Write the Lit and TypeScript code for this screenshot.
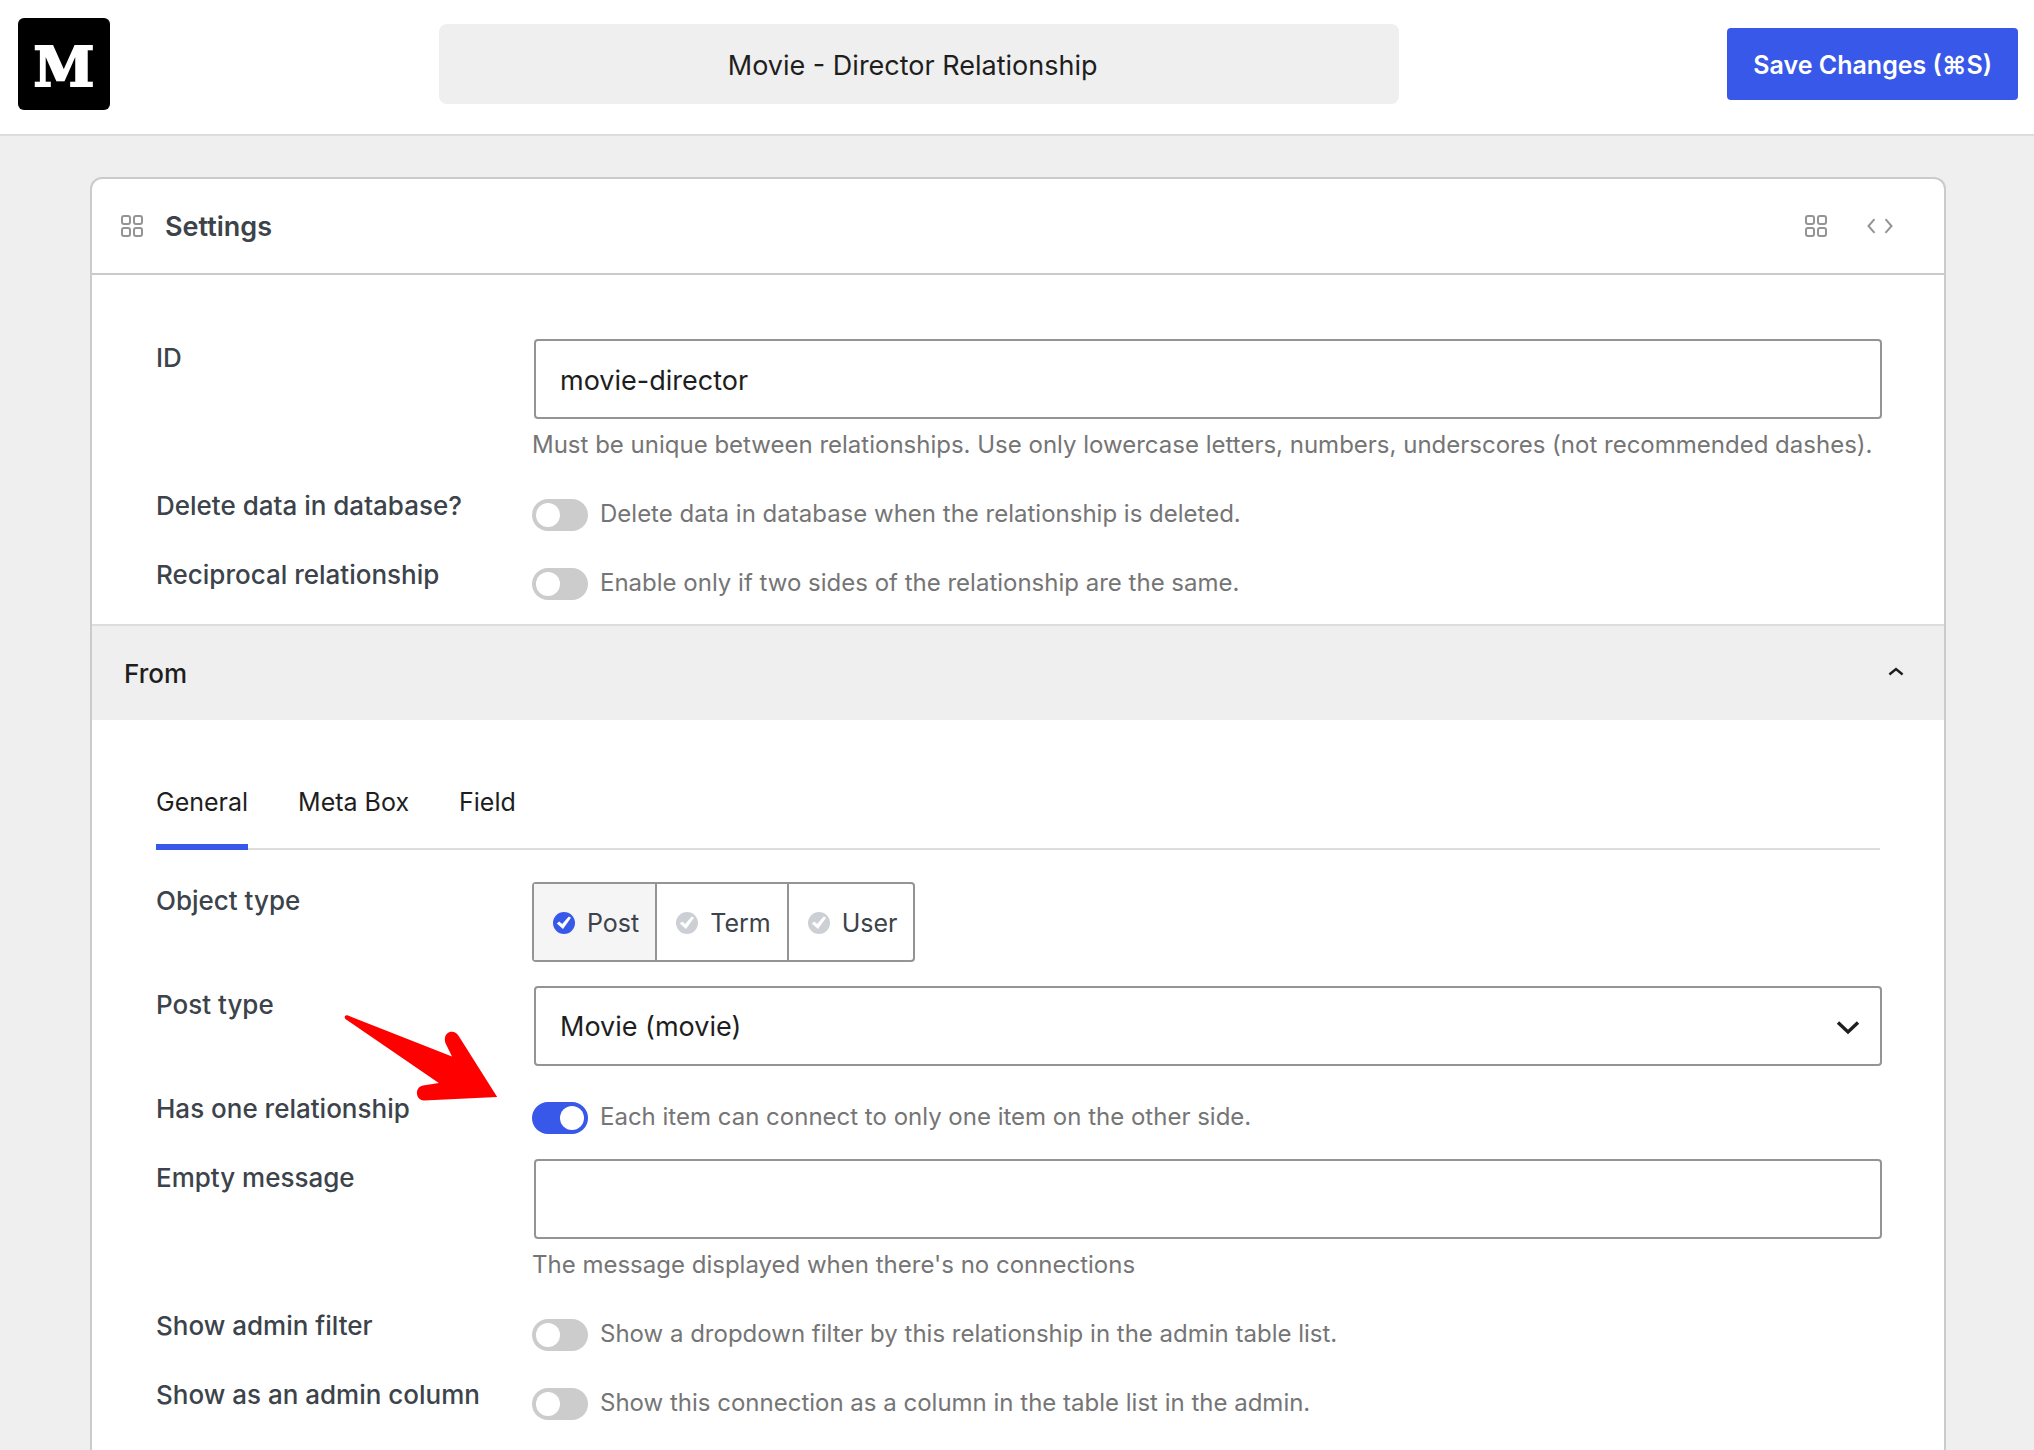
import { LitElement, html, css, svg, nothing } from "lit";
import { customElement, state } from "lit/decorators.js";

const gridIcon = html`<svg class="icon" width="22" height="22" viewBox="0 0 22 22" aria-hidden="true">
  ${[[1, 1], [13, 1], [1, 13], [13, 13]].map(
    ([x, y]) => svg`<rect x=${x} y=${y} width="8" height="8" rx="2" fill="none" stroke="currentColor" stroke-width="2" />`,
  )}
</svg>`;

const codeIcon = html`<svg class="icon" width="26" height="16" viewBox="0 0 26 16" aria-hidden="true">
  <path d="M7.5 1.2 L1.5 8 L7.5 14.8 M18.5 1.2 L24.5 8 L18.5 14.8" fill="none" stroke="currentColor" stroke-width="2" />
</svg>`;

@customElement("setting-row")
export class SettingRow extends LitElement {
  static styles = css`
    :host {
      display: grid;
      grid-template-columns: 376px minmax(0, 1fr);
      align-items: start;
      position: relative;
    }
  `;

  render() {
    return html`<slot name="label"></slot><slot></slot>`;
  }
}

@customElement("app-root")
export class AppRoot extends LitElement {
  static styles = css`
    :host {
      display: flex;
      flex-direction: column;
      min-height: 100vh;
      box-sizing: border-box;
      background: #efefef;
      color: #1e1e1e;
      font-family: Inter, "Liberation Sans", sans-serif;
      font-size: 26px;
      line-height: 36px;
    }
    *,
    *::before {
      box-sizing: border-box;
    }
    button,
    input,
    select {
      font: inherit;
      color: inherit;
      margin: 0;
    }
    button {
      border: 0;
      padding: 0;
      background: none;
      cursor: pointer;
    }
    .topbar {
      display: flex;
      align-items: flex-start;
      justify-content: space-between;
      gap: 24px;
      padding: 18px 16px 24px 18px;
      background: #fff;
      border-bottom: 2px solid #ddd;
    }
    .logo {
      display: flex;
      align-items: center;
      justify-content: center;
      width: 92px;
      height: 92px;
      padding-top: 6px;
      border-radius: 6px;
      background: #000;
      color: #fff;
      font: bold 55px/86px "DejaVu Serif", serif;
      -webkit-text-stroke: 2px #fff;
      text-decoration: none;
    }
    .title {
      flex: 0 1 960px;
      min-width: 0;
      height: 80px;
      margin-top: 6px;
      padding: 2px 24px 0 12px;
      border: 0;
      border-radius: 8px;
      background: #efefef;
      font-size: 27px;
      text-align: center;
    }
    .save {
      height: 72px;
      margin-top: 10px;
      padding: 2px 26px 0;
      border-radius: 4px;
      background: #3858e9;
      color: #fff;
      font-size: 25px;
      font-weight: 600;
      white-space: nowrap;
    }
    .card {
      flex: 1;
      margin: 41px 88px 0 90px;
      border: 2px solid #c9cbcc;
      border-bottom: 0;
      border-radius: 12px 12px 0 0;
      background: #fff;
    }
    .card-head {
      display: flex;
      align-items: center;
      gap: 22px;
      height: 96px;
      padding: 0 51px 0 29px;
      border-bottom: 2px solid #c9cbcc;
      color: #949494;
    }
    .icon {
      display: block;
    }
    .heading {
      flex: 1;
      margin: 0;
      padding-top: 2px;
      color: #3c434a;
      font-size: 27px;
      font-weight: 600;
    }
    .views {
      display: flex;
      align-items: center;
      gap: 40px;
    }
    .rows {
      display: flex;
      flex-direction: column;
      gap: 24px;
      padding: 64px 64px 23px;
    }
    .label {
      padding-top: 1px;
      color: #3c434a;
      font-size: 26px;
      font-weight: 500;
    }
    .box {
      display: block;
      width: 100%;
      height: 80px;
      margin-left: 2px;
      padding: 2px 24px 0;
      border: 2px solid #949494;
      border-radius: 4px;
      background: #fff;
      font-size: 27px;
      appearance: none;
    }
    .help {
      margin: 0;
      color: #757575;
      font-size: 24px;
    }
    .below {
      padding-top: 8px;
    }
    .switch-line {
      display: flex;
      align-items: flex-start;
      gap: 12px;
      padding-top: 8px;
      min-height: 45px;
    }
    .switch-line .help {
      padding-top: 1px;
    }
    .switch {
      flex: none;
      width: 56px;
      height: 32px;
      margin-top: 4px;
      padding: 4px;
      border-radius: 16px;
      background: #ccc;
      appearance: none;
    }
    .switch::before {
      content: "";
      display: block;
      width: 24px;
      height: 24px;
      border-radius: 50%;
      background: #fff;
    }
    .switch:checked {
      background: #3858e9;
    }
    .switch:checked::before {
      margin-left: auto;
    }
    .section-head {
      display: flex;
      align-items: center;
      justify-content: space-between;
      width: 100%;
      height: 96px;
      padding: 0 40px 0 32px;
      border-top: 2px solid #ddd;
      background: #efefef;
      font-size: 26px;
      font-weight: 500;
    }
    .section-name {
      padding-top: 2px;
    }
    .tabs {
      display: flex;
      gap: 50px;
      margin-bottom: 8px;
      border-bottom: 2px solid #ddd;
    }
    .tab {
      height: 66px;
      margin-bottom: -2px;
      padding-bottom: 24px;
      border-bottom: 6px solid transparent;
      font-size: 25px;
    }
    .tab.active {
      border-color: #3858e9;
    }
    .choices {
      display: flex;
      justify-self: start;
      height: 80px;
      border: 2px solid #949494;
      border-radius: 4px;
      color: #3c434a;
      font-size: 25px;
    }
    .choice {
      display: flex;
      align-items: center;
      gap: 12px;
      padding: 2px 16px 0 19px;
    }
    .choice + .choice {
      border-left: 2px solid #949494;
    }
    .choice.on {
      background: #f5f5f5;
    }
    .mark {
      display: grid;
      color: #ccd0d4;
    }
    .on .mark {
      color: #3858e9;
    }
    .radio,
    .tick {
      grid-area: 1 / 1;
      width: 22px;
      height: 22px;
    }
    .radio {
      border-radius: 50%;
      background: currentColor;
      appearance: none;
      color: inherit;
    }
    .tick {
      pointer-events: none;
    }
    .picker {
      position: relative;
    }
    .caret {
      position: absolute;
      right: 20px;
      top: 34px;
      pointer-events: none;
    }
    .arrow {
      position: absolute;
      left: 184px;
      top: -79px;
      pointer-events: none;
    }
  `;

  @state() private open = true;
  @state() private tab = "General";
  @state() private objectType = "Post";

  private row(id: string, label: string, control: unknown, extra: unknown = nothing) {
    return html`<setting-row>
      <label class="label" slot="label" for=${id}>${label}</label>
      ${control}${extra}
    </setting-row>`;
  }

  private text(id: string, label: string, value: string, help: string) {
    return this.row(
      id,
      label,
      html`<div>
        <input class="box" id=${id} type="text" .value=${value} aria-describedby="${id}-help" />
        <p class="help below" id="${id}-help">${help}</p>
      </div>`,
    );
  }

  private toggle(id: string, label: string, help: string, checked = false, extra: unknown = nothing) {
    return this.row(
      id,
      label,
      html`<div class="switch-line">
        <input class="switch" id=${id} type="checkbox" ?checked=${checked} aria-describedby="${id}-help" />
        <p class="help" id="${id}-help">${help}</p>
      </div>`,
      extra,
    );
  }

  private choice(name: string) {
    const on = this.objectType === name;
    return html`<label class="choice ${on ? "on" : ""}">
      <span class="mark">
        <input class="radio" type="radio" name="object-type" .checked=${on} @change=${() => (this.objectType = name)} />
        <svg class="tick" viewBox="0 0 22 22" aria-hidden="true">
          <path d="M3.8 11.4 L6.2 9.4 L9.2 12 L15.8 4.4 L18 5.8 L10 17 Z" fill="#fff" />
        </svg>
      </span>
      <span>${name}</span>
    </label>`;
  }

  private arrow() {
    return html`<svg class="arrow" width="160" height="92" viewBox="340 1010 160 92" aria-hidden="true">
      <path
        d="M348 1014.6 L452 1055.4 L445.4 1042 C442 1030 455 1027 459 1035.4 L497.2 1096 L424 1099.4 C415 1099 414.5 1086 423 1084.4 L438.8 1082 L345.4 1018 C343.6 1016 345.5 1013.6 348 1014.6 Z"
        fill="#f00"
      />
    </svg>`;
  }

  render() {
    return html`
      <header class="topbar">
        <a class="logo" href="#">M</a>
        <input class="title" type="text" aria-label="Title" .value=${"Movie - Director Relationship"} />
        <button class="save" type="button">Save Changes (⌘S)</button>
      </header>
      <main class="card">
        <div class="card-head">
          ${gridIcon}
          <h1 class="heading">Settings</h1>
          <div class="views">
            <button type="button" aria-label="Visual">${gridIcon}</button>
            <button type="button" aria-label="Code">${codeIcon}</button>
          </div>
        </div>
        <section class="rows">
          ${this.text("id", "ID", "movie-director", "Must be unique between relationships. Use only lowercase letters, numbers, underscores (not recommended dashes).")}
          ${this.toggle("delete-data", "Delete data in database?", "Delete data in database when the relationship is deleted.")}
          ${this.toggle("reciprocal", "Reciprocal relationship", "Enable only if two sides of the relationship are the same.")}
        </section>
        <button class="section-head" type="button" aria-expanded=${this.open} @click=${() => (this.open = !this.open)}>
          <span class="section-name">From</span>
          <svg width="16" height="16" viewBox="0 0 16 16" aria-hidden="true">
            <path d="M1.4 9.5 L8 4 L14.6 9.5" fill="none" stroke="#1e1e1e" stroke-width="2.4" />
          </svg>
        </button>
        ${this.open ? this.section() : nothing}
      </main>
    `;
  }

  private section() {
    return html`<section class="rows">
      <div class="tabs" role="tablist">
        ${["General", "Meta Box", "Field"].map(
          (name) => html`<button
            class="tab ${this.tab === name ? "active" : ""}"
            type="button"
            role="tab"
            aria-selected=${this.tab === name}
            @click=${() => (this.tab = name)}
          >${name}</button>`,
        )}
      </div>
      <setting-row>
        <span class="label" slot="label" id="object-type">Object type</span>
        <div class="choices" role="radiogroup" aria-labelledby="object-type">
          ${["Post", "Term", "User"].map((name) => this.choice(name))}
        </div>
      </setting-row>
      ${this.row(
        "post-type",
        "Post type",
        html`<div class="picker">
          <select class="box" id="post-type">
            <option>Movie (movie)</option>
          </select>
          <svg class="caret" width="24" height="16" viewBox="0 0 24 16" aria-hidden="true">
            <path d="M2 2.5 L12 12 L22 2.5" fill="none" stroke="#1e1e1e" stroke-width="3.4" />
          </svg>
        </div>`,
      )}
      ${this.toggle("has-one", "Has one relationship", "Each item can connect to only one item on the other side.", true, this.arrow())}
      ${this.text("empty-message", "Empty message", "", "The message displayed when there's no connections")}
      ${this.toggle("admin-filter", "Show admin filter", "Show a dropdown filter by this relationship in the admin table list.")}
      ${this.toggle("admin-column", "Show as an admin column", "Show this connection as a column in the table list in the admin.")}
    </section>`;
  }
}
